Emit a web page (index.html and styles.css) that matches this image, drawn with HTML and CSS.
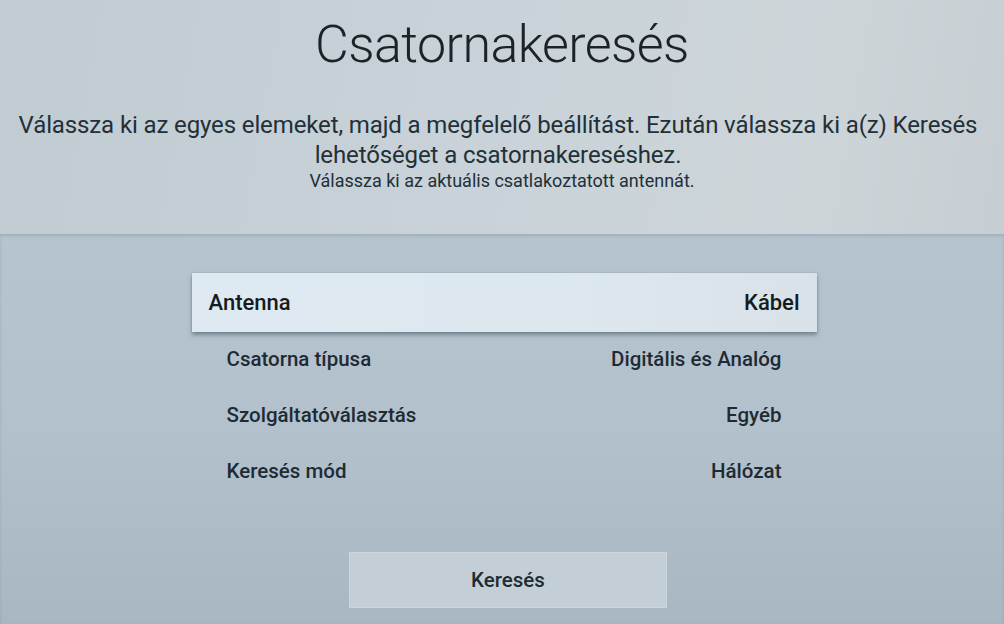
FILE: index.html
```html
<!DOCTYPE html>
<html lang="hu">
<head>
<meta charset="utf-8">
<title>Csatornakeresés</title>
<link rel="stylesheet" href="styles.css">
</head>
<body>
<div class="screen">
  <header class="head">
    <h1 class="title">Csatornakeresés</h1>
    <p class="desc">Válassza ki az egyes elemeket, majd a megfelelő beállítást. Ezután válassza ki a(z) Keresés<br>lehetőséget a csatornakereséshez.</p>
    <p class="hint">Válassza ki az aktuális csatlakoztatott antennát.</p>
  </header>
  <main class="body">
    <ul class="list">
      <li class="row selected"><span>Antenna</span><span>Kábel</span></li>
      <li class="row"><span>Csatorna típusa</span><span>Digitális és Analóg</span></li>
      <li class="row"><span>Szolgáltatóválasztás</span><span>Egyéb</span></li>
      <li class="row"><span>Keresés mód</span><span>Hálózat</span></li>
    </ul>
    <div class="btn">Keresés</div>
  </main>
</div>
</body>
</html>
```

FILE: styles.css
```css
html, body {
  margin: 0;
  padding: 0;
}
body {
  width: 1004px;
  height: 624px;
  overflow: hidden;
  font-family: Roboto, "Noto Sans", "Liberation Sans", sans-serif;
  color: #1e282e;
}
.screen {
  width: 1004px;
  height: 624px;
  display: flex;
  flex-direction: column;
}
.head {
  height: 234px;
  box-sizing: border-box;
  padding-top: 19px;
  text-align: center;
  background: linear-gradient(100deg, #c0cbd2 0%, #c8d2d8 45%, #cdd5d9 80%, #c6ced3 100%);
}
.title {
  margin: 0;
  font-size: 52px;
  line-height: 52px;
  font-weight: 300;
  letter-spacing: -0.6px;
  color: #1b2328;
}
.desc {
  margin: 39px 0 0 -8px;
  font-size: 24px;
  line-height: 30px;
  font-weight: 400;
  letter-spacing: -0.12px;
  color: #223038;
}
.hint {
  margin: 0;
  font-size: 18px;
  line-height: 22px;
  font-weight: 400;
  color: #223038;
}
.body {
  flex: 1;
  display: flex;
  flex-direction: column;
  align-items: center;
  background: linear-gradient(180deg, #b6c4cf 0%, #b3c1cc 50%, #a9b7c2 100%);
  box-shadow: inset 0 2px 3px rgba(120, 135, 145, 0.35);
}
.list {
  list-style: none;
  margin: 41px 0 0 4px;
  padding: 0;
  width: 555px;
  display: flex;
  flex-direction: column;
}
.row {
  height: 56px;
  display: flex;
  align-items: center;
  justify-content: space-between;
  font-size: 20.5px;
  font-weight: 500;
  color: #1f2b33;
}
.row.selected {
  height: 59px;
  margin: -2px -35px -1px -35px;
  padding: 0 17px;
  font-size: 22px;
  color: #151c20;
  background: linear-gradient(90deg, #dfe9f1 0%, #dde7ee 60%, #d9e2e8 100%);
  box-shadow: 0 3px 4px rgba(70, 85, 95, 0.55), 0 0 1px rgba(90, 105, 115, 0.6);
}
.btn {
  margin: 53px 0 0 12px;
  width: 318px;
  height: 56px;
  box-sizing: border-box;
  display: flex;
  align-items: center;
  justify-content: center;
  font-size: 20.5px;
  font-weight: 500;
  color: #1f2b33;
  background: #c3ced6;
  border: 1px solid #cdd6dc;
}
```
